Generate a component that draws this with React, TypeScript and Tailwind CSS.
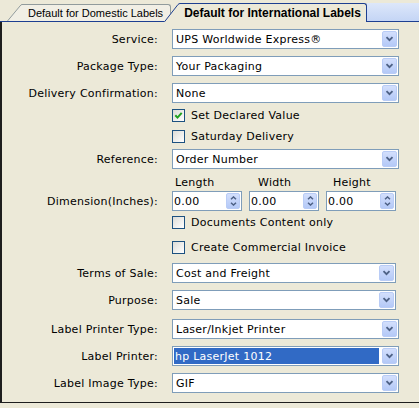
import React from 'react'

function Chevron() {
  return (
    <svg width="9" height="6" viewBox="0 0 9 6" className="block">
      <path d="M1.5 1.2 L4.5 4.2 L7.5 1.2" fill="none" stroke="#4D6185" strokeWidth="1.8" />
    </svg>
  )
}

function DropButton() {
  return (
    <div className="mr-px flex h-[16px] w-[15px] shrink-0 items-center justify-center rounded-[2px] border border-[#B9CCF6] bg-gradient-to-b from-[#D3DFFC] to-[#B4C9F7]">
      <Chevron />
    </div>
  )
}

function Select({ value, narrow = false, selected = false }: { value: string; narrow?: boolean; selected?: boolean }) {
  return (
    <div className={`flex h-[20px] items-center border border-[#7F9DB9] bg-white ${narrow ? 'w-[224px]' : 'w-[227px]'}`}>
      {selected ? (
        <div className="ml-px mr-[3px] flex h-[16px] flex-1 items-center bg-[#316AC5] pl-px text-white">{value}</div>
      ) : (
        <div className="flex-1 truncate pl-[3px]">{value}</div>
      )}
      <DropButton />
    </div>
  )
}

function Checkbox({ checked = false }: { checked?: boolean }) {
  return (
    <div className="flex h-[13px] w-[13px] shrink-0 items-center justify-center border border-[#1C5180] bg-gradient-to-br from-[#DCDCD7] to-white">
      {checked && (
        <svg width="9" height="9" viewBox="0 0 9 9" className="block">
          <path d="M1.3 4.2 L3.5 6.6 L7.7 1.8" fill="none" stroke="#21A121" strokeWidth="2" />
        </svg>
      )}
    </div>
  )
}

function Spinner() {
  return (
    <div className="mr-px flex h-[16px] w-[14px] shrink-0 flex-col items-center justify-center gap-[2px] rounded-[2px] border border-[#B9CCF6] bg-gradient-to-b from-[#D3DFFC] to-[#B4C9F7]">
      <svg width="7" height="4" viewBox="0 0 7 4" className="block">
        <path d="M1 3.3 L3.5 0.9 L6 3.3" fill="none" stroke="#4D6185" strokeWidth="1.4" />
      </svg>
      <svg width="7" height="4" viewBox="0 0 7 4" className="block">
        <path d="M1 0.7 L3.5 3.1 L6 0.7" fill="none" stroke="#4D6185" strokeWidth="1.4" />
      </svg>
    </div>
  )
}

function NumInput() {
  return (
    <div className="flex h-[20px] w-[70px] items-center border border-[#7F9DB9] bg-white">
      <div className="flex-1 pl-px">0.00</div>
      <Spinner />
    </div>
  )
}

function Row({ label, mt, children }: { label?: string; mt: string; children: React.ReactNode }) {
  return (
    <div className={`flex items-center ${mt}`}>
      <div className="w-[156px] shrink-0 text-right">{label}</div>
      <div className="ml-[14px] flex items-center">{children}</div>
    </div>
  )
}

function CheckRow({ label, mt, checked }: { label: string; mt: string; checked?: boolean }) {
  return (
    <Row mt={mt}>
      <Checkbox checked={checked} />
      <span className="ml-[6px]">{label}</span>
    </Row>
  )
}

export default function App() {
  return (
    <div className="h-[408px] w-[419px] overflow-hidden bg-[#ECE9D8] font-['DejaVu_Sans',sans-serif] text-[11px] leading-[13px] tracking-[0.25px] text-black">
      <div className="flex h-[22px] items-end border-b border-[#1D3F91] pl-[7px] tracking-normal">
        <div className="flex h-[17px]">
          <svg width="15" height="17" viewBox="0 0 15 17" className="block">
            <path d="M0 17 L13 2 Q14 0.5 15 0.5 L15 17 Z" fill="#F1EFE5" />
            <path d="M0.5 17 L13 2 Q14 0.5 15 0.5" fill="none" stroke="#919B9C" />
          </svg>
          <div className="flex items-center rounded-tr-[3px] border-t border-r border-[#919B9C] bg-[#F1EFE5] pl-[6px] pr-[7px] font-['Liberation_Sans',sans-serif] text-[11px]">
            Default for Domestic Labels
          </div>
        </div>
        <div className="relative z-10 -mb-px -ml-[7px] flex h-[19px]">
          <svg width="16" height="19" viewBox="0 0 16 19" className="block">
            <path d="M0 19 L14 1.5 Q15 0.5 16 0.5 L16 19 Z" fill="#ECE9D8" />
            <path d="M0.5 18.8 L14 1.5 Q15 0.5 16 0.5" fill="none" stroke="#1D3F91" />
          </svg>
          <div className="flex items-center rounded-tr-[3px] border-t border-r border-[#1D3F91] bg-[#ECE9D8] pl-[4px] pr-[5px] font-['Liberation_Sans',sans-serif] text-[12px] font-bold">
            Default for International Labels
          </div>
        </div>
        <div className="h-[18px] flex-1 bg-gradient-to-b from-[#DDE7FA] to-[#C4D5F5]" />
      </div>

      <div className="flex h-[381px] flex-col border-b border-l-2 border-[#1E1E1E]">
        <Row label="Service:" mt="mt-[7px]">
          <Select value="UPS Worldwide Express®" />
        </Row>
        <Row label="Package Type:" mt="mt-[7px]">
          <Select value="Your Packaging" />
        </Row>
        <Row label="Delivery Confirmation:" mt="mt-[7px]">
          <Select value="None" />
        </Row>
        <CheckRow label="Set Declared Value" mt="mt-[6px]" checked />
        <CheckRow label="Saturday Delivery" mt="mt-[8px]" />
        <Row label="Reference:" mt="mt-[6px]">
          <Select value="Order Number" />
        </Row>
        <Row mt="mt-[7px]">
          <div className="flex w-[230px]">
            <span className="w-[77px] pl-[3px]">Length</span>
            <span className="w-[77px] pl-[9px]">Width</span>
            <span className="pl-[7px]">Height</span>
          </div>
        </Row>
        <Row label="Dimension(Inches):" mt="mt-[2px]">
          <div className="flex gap-[7px]">
            <NumInput />
            <NumInput />
            <NumInput />
          </div>
        </Row>
        <CheckRow label="Documents Content only" mt="mt-[5px]" />
        <CheckRow label="Create Commercial Invoice" mt="mt-[12px]" />
        <Row label="Terms of Sale:" mt="mt-[9px]">
          <Select value="Cost and Freight" narrow />
        </Row>
        <Row label="Purpose:" mt="mt-[7px]">
          <Select value="Sale" narrow />
        </Row>
        <Row label="Label Printer Type:" mt="mt-[9px]">
          <Select value="Laser/Inkjet Printer" />
        </Row>
        <Row label="Label Printer:" mt="mt-[7px]">
          <Select value="hp LaserJet 1012" selected />
        </Row>
        <Row label="Label Image Type:" mt="mt-[7px]">
          <Select value="GIF" />
        </Row>
      </div>
    </div>
  )
}
